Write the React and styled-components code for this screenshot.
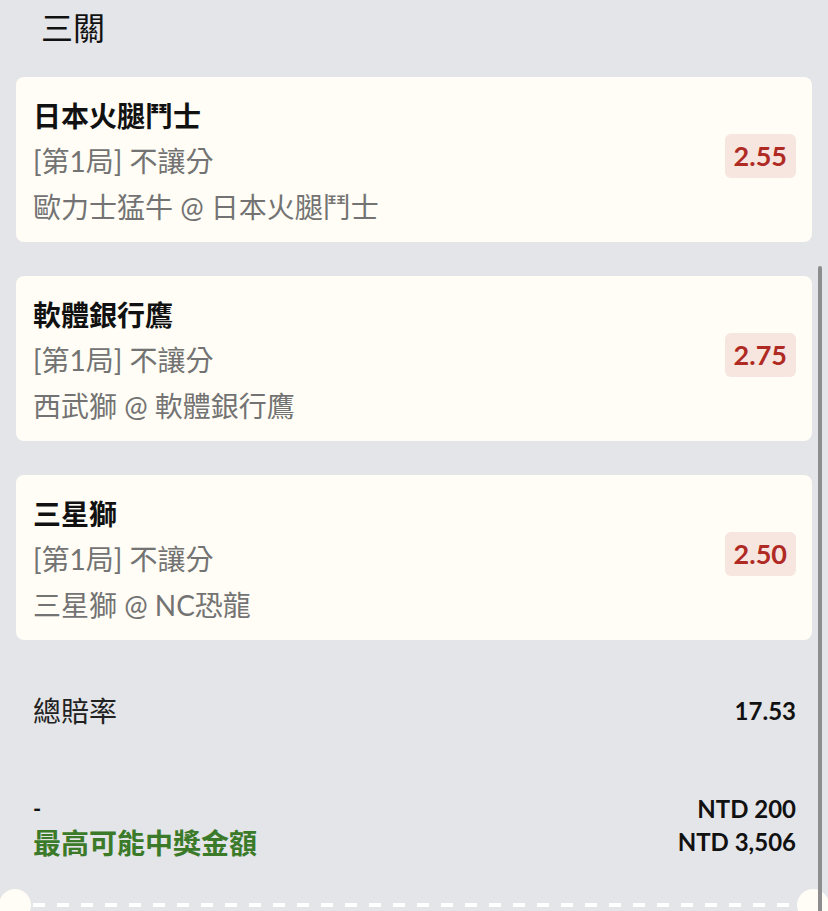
import React from "react";
import styled, { createGlobalStyle } from "styled-components";

const GlobalStyle = createGlobalStyle`
  html, body {
    margin: 0;
    padding: 0;
    background: #e4e5e8;
    font-family: Lato, "Noto Sans CJK TC", sans-serif;
  }
`;

const bets = [
  { team: "日本火腿鬥士", market: "[第1局] 不讓分", match: "歐力士猛牛 @ 日本火腿鬥士", odds: "2.55" },
  { team: "軟體銀行鷹", market: "[第1局] 不讓分", match: "西武獅 @ 軟體銀行鷹", odds: "2.75" },
  { team: "三星獅", market: "[第1局] 不讓分", match: "三星獅 @ NC恐龍", odds: "2.50" },
];

export default function App() {
  return (
    <Page>
      <GlobalStyle />
      <Title>三關</Title>
      <CardList>
        {bets.map((b) => (
          <Card key={b.team}>
            <Info>
              <Team>{b.team}</Team>
              <Sub>{b.market}</Sub>
              <Sub>{b.match}</Sub>
            </Info>
            <Odds>{b.odds}</Odds>
          </Card>
        ))}
      </CardList>
      <Summary>
        <Row>
          <Label>總賠率</Label>
          <Value>17.53</Value>
        </Row>
        <Payout>
          <Row tight>
            <Dash>-</Dash>
            <Value>NTD 200</Value>
          </Row>
          <Row tight>
            <Win>最高可能中獎金額</Win>
            <Value>NTD 3,506</Value>
          </Row>
        </Payout>
      </Summary>
      <Tear>
        <Notch />
        <DashLine />
        <Notch />
      </Tear>
      <ScrollThumb />
    </Page>
  );
}

const Page = styled.div`
  position: relative;
  width: 828px;
  height: 911px;
  overflow: hidden;
  padding: 0 16px;
  box-sizing: border-box;
`;

const Title = styled.h2`
  margin: 0;
  padding: 7px 0 0 25px;
  height: 77px;
  box-sizing: border-box;
  font-size: 32px;
  font-weight: 400;
  line-height: 42px;
  color: #111;
`;

const CardList = styled.div`
  display: flex;
  flex-direction: column;
  gap: 34px;
`;

const Card = styled.div`
  display: flex;
  align-items: center;
  justify-content: space-between;
  height: 165px;
  box-sizing: border-box;
  padding: 0 16px 0 17px;
  background: #fffdf5;
  border-radius: 8px;
`;

const Info = styled.div`
  display: flex;
  flex-direction: column;
  padding-top: 4px;
`;

const Team = styled.div`
  font-size: 28px;
  font-weight: 700;
  line-height: 44px;
  color: #111;
`;

const Sub = styled.div`
  font-size: 28px;
  line-height: 46px;
  color: #737373;
`;

const Odds = styled.div`
  margin-bottom: 7px;
  padding: 4px 9px;
  border-radius: 6px;
  background: #f7e5e0;
  color: #b02a24;
  font-family: Lato, sans-serif;
  font-weight: 700;
  font-size: 27px;
  line-height: 36px;
`;

const Summary = styled.div`
  padding: 0 16px 0 17px;
`;

const Row = styled.div`
  display: flex;
  justify-content: space-between;
  align-items: center;
  height: ${(p) => (p.tight ? "33px" : "auto")};
  padding-top: ${(p) => (p.tight ? "0" : "50px")};
`;

const Label = styled.div`
  font-size: 28px;
  color: #222;
`;

const Value = styled.div`
  font-family: Lato, sans-serif;
  font-weight: 700;
  font-size: 24px;
  color: #111;
`;

const Payout = styled.div`
  margin-top: 62px;
`;

const Dash = styled.div`
  font-size: 22px;
  font-weight: 700;
  color: #111;
`;

const Win = styled.div`
  font-size: 28px;
  font-weight: 700;
  color: #3b7a28;
`;

const Tear = styled.div`
  position: absolute;
  left: -1px;
  right: -1px;
  top: 889px;
  display: flex;
  align-items: center;
`;

const Notch = styled.div`
  width: 32px;
  height: 32px;
  border-radius: 50%;
  background: #fffdf5;
  flex: none;
`;

const DashLine = styled.div`
  flex: 1;
  height: 4px;
  margin: 0 2px;
  background: repeating-linear-gradient(
    to right,
    #ffffff 0 12px,
    transparent 12px 24px
  );
`;

const ScrollThumb = styled.div`
  position: absolute;
  right: 6px;
  top: 266px;
  bottom: 0;
  width: 4px;
  border-radius: 2px 2px 0 0;
  background: #8d8d8d;
`;
